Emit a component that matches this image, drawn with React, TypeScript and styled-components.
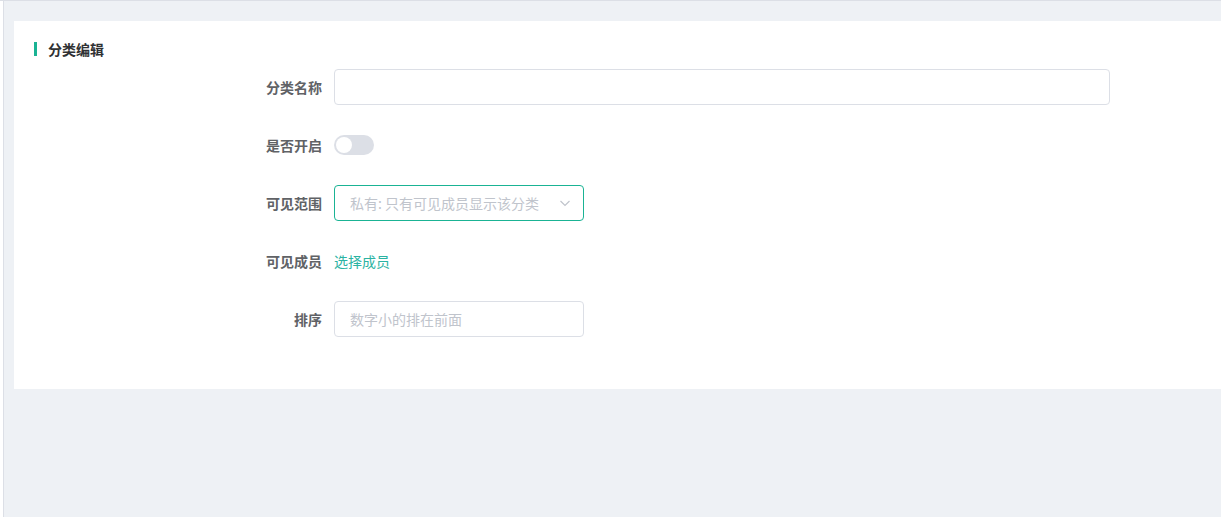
import React from "react";
import styled, { createGlobalStyle } from "styled-components";

const Global = createGlobalStyle`
  html, body { margin: 0; padding: 0; background: #fff; }
  body { font-family: "Noto Sans CJK SC", "Noto Sans", sans-serif; }
  * { box-sizing: border-box; }
`;

const Shell = styled.div`
  height: 517px;
  border-top: 1px solid #dcdfe6;
  padding-left: 3px;
  background: #fff;
  display: flex;
`;

const Main = styled.div`
  flex: 1;
  border-left: 1px solid #dcdfe6;
  background: #eef1f5;
  padding: 20px 0 0 10px;
`;

const Card = styled.div`
  background: #fff;
  padding: 20px 20px 30px 20px;
`;

const Title = styled.div`
  display: flex;
  align-items: center;
  gap: 11px;
  height: 16px;
  font-size: 14px;
  font-weight: 700;
  color: #303133;
  margin-bottom: 12px;
  &::before {
    content: "";
    width: 3px;
    height: 14px;
    background: #1ab394;
  }
`;

const Form = styled.div`
  margin-left: 200px;
  display: flex;
  flex-direction: column;
  gap: 22px;
  padding-bottom: 22px;
`;

const Row = styled.div`
  display: flex;
  align-items: center;
  height: 36px;
`;

const Label = styled.label`
  width: 100px;
  padding-right: 12px;
  text-align: right;
  font-size: 14px;
  font-weight: 700;
  color: #606266;
  line-height: 36px;
`;

const Input = styled.input<{ $w: number }>`
  width: ${(p) => p.$w}px;
  height: 36px;
  border: 1px solid #dcdfe6;
  border-radius: 4px;
  padding: 0 15px;
  font-family: inherit;
  font-size: 14px;
  color: #606266;
  outline: none;
  &::placeholder { color: #c0c4cc; }
`;

const Switch = styled.span`
  position: relative;
  width: 40px;
  height: 20px;
  border-radius: 10px;
  background: #dcdfe6;
  &::after {
    content: "";
    position: absolute;
    left: 2px;
    top: 2px;
    width: 16px;
    height: 16px;
    border-radius: 50%;
    background: #fff;
  }
`;

const Select = styled.div`
  width: 250px;
  height: 36px;
  border: 1px solid #1ab394;
  border-radius: 4px;
  padding: 0 12px 0 15px;
  display: flex;
  align-items: center;
  justify-content: space-between;
  font-size: 14px;
  color: #c0c4cc;
`;

const Link = styled.a`
  font-size: 14px;
  color: #2bb3a3;
  text-decoration: none;
  cursor: pointer;
`;

export default function App() {
  return (
    <>
      <Global />
      <Shell>
        <Main>
          <Card>
            <Title>分类编辑</Title>
            <Form>
              <Row>
                <Label>分类名称</Label>
                <Input $w={776} />
              </Row>
              <Row>
                <Label>是否开启</Label>
                <Switch />
              </Row>
              <Row>
                <Label>可见范围</Label>
                <Select>
                  <span>私有: 只有可见成员显示该分类</span>
                  <svg width="12" height="12" viewBox="0 0 12 12">
                    <path d="M1.5 4 L6 8.5 L10.5 4" fill="none" stroke="#c0c4cc" strokeWidth="1.2" />
                  </svg>
                </Select>
              </Row>
              <Row>
                <Label>可见成员</Label>
                <Link>选择成员</Link>
              </Row>
              <Row>
                <Label>排序</Label>
                <Input $w={250} placeholder="数字小的排在前面" />
              </Row>
            </Form>
          </Card>
        </Main>
      </Shell>
    </>
  );
}
